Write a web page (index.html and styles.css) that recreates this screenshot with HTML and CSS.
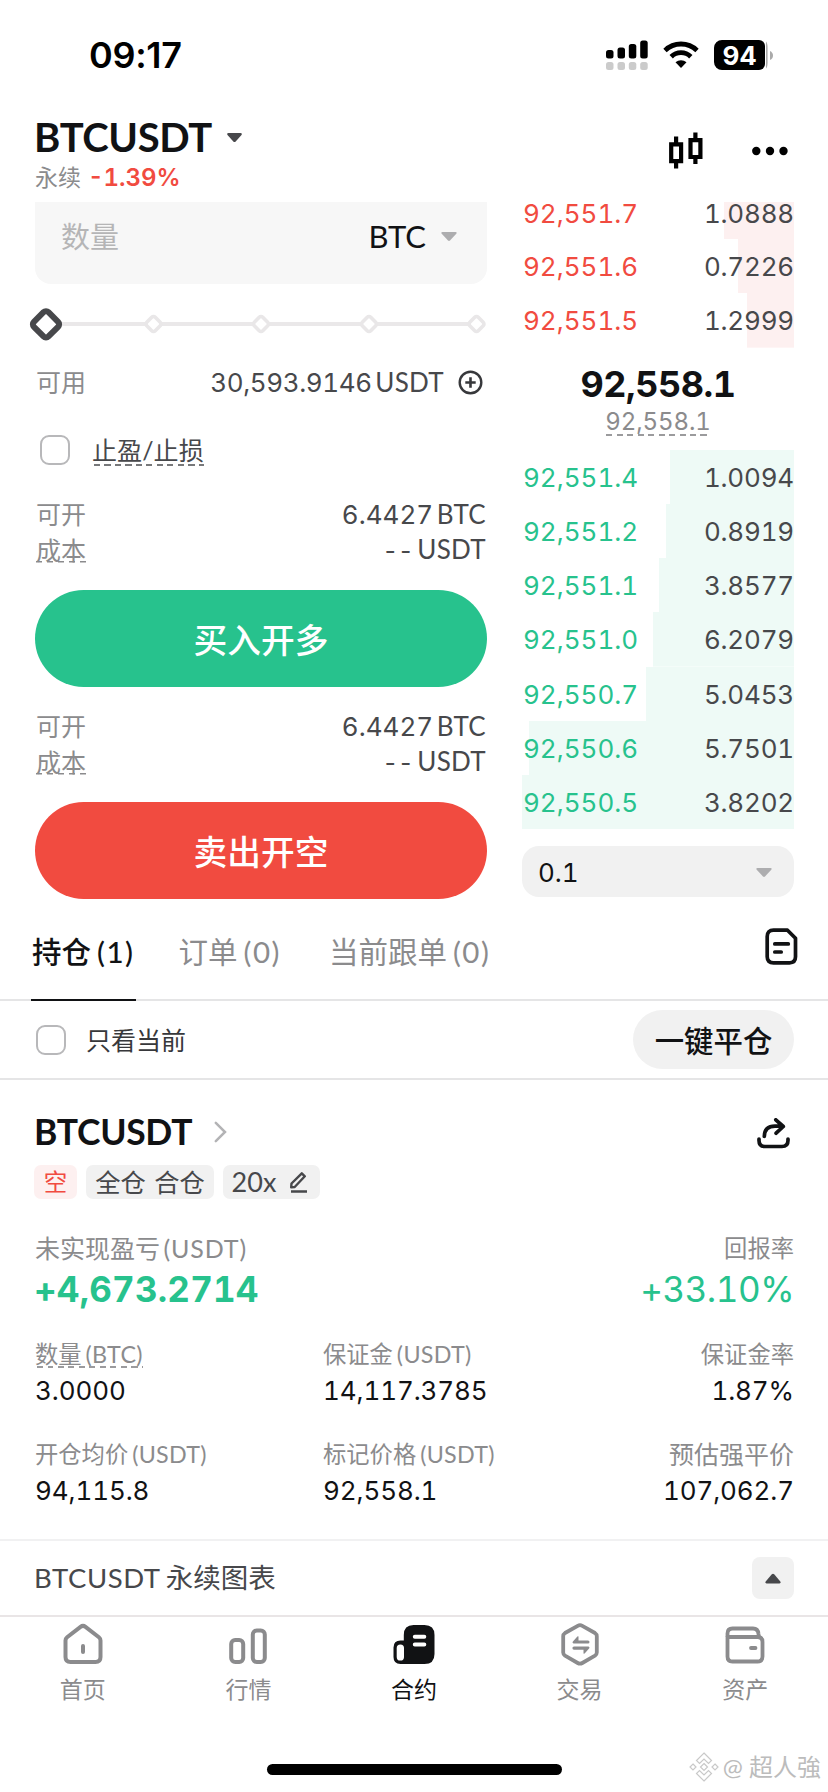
FILE: index.html
```html
<!DOCTYPE html>
<html lang="zh-CN">
<head>
<meta charset="utf-8">
<title>BTCUSDT 永续</title>
<link rel="stylesheet" href="styles.css">
</head>
<body>
<div class="status">
  <span class="clock">09:17</span>
  <div class="status-icons">
    <svg width="42" height="30" viewBox="0 0 42 30"><g fill="#000"><rect x="0" y="10" width="7.500" height="8.500" rx="2.500"/><rect x="11.500" y="7.500" width="7.500" height="11" rx="2.500"/><rect x="22.800" y="4" width="7.500" height="14.500" rx="2.500"/><rect x="34.200" y="0.500" width="7.500" height="18" rx="2.500"/></g><g fill="#cbcbcb"><rect x="0" y="22" width="7.500" height="8" rx="2.500"/><rect x="11.500" y="22" width="7.500" height="8" rx="2.500"/><rect x="22.800" y="22" width="7.500" height="8" rx="2.500"/><rect x="34.200" y="22" width="7.500" height="8" rx="2.500"/></g></svg>
    <svg class="wifi" width="36" height="28" viewBox="0 0 36 28"><g fill="none" stroke="#000" stroke-width="4.800"><path d="M2 9.500a23 23 0 0 1 32 0"/><path d="M8.200 15.700a14 14 0 0 1 19.600 0"/></g><path d="M12.500 21.200a8.700 8.700 0 0 1 11 0l-5.500 5.800z"/></svg>
    <span class="battery">94</span>
    <svg class="cap" width="7" height="30" viewBox="0 0 7 30"><path d="M0 1.500Q1.600 3 1.600 8v14q0 5-1.600 6.500z" fill="#aaa"/><path d="M4 11q3 1.500 3 4.500t-3 4.500z" fill="#aaa"/></svg>
  </div>
</div>

<header class="header">
  <div>
    <div class="pair"><span class="pair-name">BTCUSDT</span><svg width="15" height="10" viewBox="0 0 15 10"><path d="M1.500 0h12q2 .3 1 2L8.700 8.600q-1.200 1-2.400 0L.5 2q-1-1.700 1-2z" fill="#47484b"/></svg></div>
    <div class="change"><span class="perp">永续</span><span class="pct num">-1.39%</span></div>
  </div>
  <div class="header-icons">
    <svg width="34" height="37" viewBox="0 0 34 37"><g fill="none" stroke="#000" stroke-width="4.200"><path d="M2.200 12.300h9.900v16.800H2.200zM7.100 4.500v7M7.100 30v6.500M21.500 8.200h9.900V25h-9.900zM26.400.5V8M26.400 25v7"/></g></svg>
    <svg width="36" height="10" viewBox="0 0 36 10"><circle cx="4.300" cy="5" r="4.200"/><circle cx="18" cy="5" r="4.200"/><circle cx="31.500" cy="5" r="4.200"/></svg>
  </div>
</header>

<main class="trade">
  <section class="form">
    <div class="amount"><span class="placeholder">数量</span><span class="unit">BTC</span><svg width="16" height="10" viewBox="0 0 16 10"><path d="M1.500 0h13q1.800.3.800 1.700L9 8.600q-1 .9-2 0L.7 1.700q-1-1.400.8-1.700z" fill="#adadaf"/></svg></div>
    <svg class="slider" width="460" height="80" viewBox="0 0 460 80">
      <path d="M20 40h426" stroke="#eae8e9" stroke-width="4"/>
      <g fill="#fff" stroke="#e9e7e8" stroke-width="3.600">
        <rect x="-6" y="-6" width="12" height="12" rx="2.500" transform="translate(124.500 40) rotate(45)"/>
        <rect x="-6" y="-6" width="12" height="12" rx="2.500" transform="translate(232 40) rotate(45)"/>
        <rect x="-6" y="-6" width="12" height="12" rx="2.500" transform="translate(340 40) rotate(45)"/>
        <rect x="-6" y="-6" width="12" height="12" rx="2.500" transform="translate(447.500 40) rotate(45)"/>
      </g>
      <rect x="-10.300" y="-10.300" width="20.600" height="20.600" rx="3.500" fill="#fff" stroke="#47484b" stroke-width="6" transform="translate(17 40.300) rotate(45)"/>
    </svg>
    <div class="row"><span class="label">可用</span><span class="amt avail"><span class="num">30,593.9146</span> <span class="lat">USDT</span></span><svg class="plus" width="25" height="25" viewBox="0 0 25 25"><g fill="none" stroke="#37383b" stroke-width="2.400"><circle cx="12.500" cy="12.500" r="10.800"/><path d="M7.300 12.500h10.400M12.500 7.300v10.400" stroke-width="2.600"/></g></svg></div>
    <div class="tpsl"><span class="box"></span><span class="dash">止盈/止损</span></div>
    <div class="row"><span class="label">可开</span><span class="amt"><span class="num">6.4427</span> <span class="lat">BTC</span></span></div>
    <div class="row"><span class="label cost">成本</span><span class="amt"><span class="num minus">--</span> <span class="lat">USDT</span></span></div>
    <div class="btn buy">买入开多</div>
    <div class="row"><span class="label">可开</span><span class="amt"><span class="num">6.4427</span> <span class="lat">BTC</span></span></div>
    <div class="row"><span class="label cost">成本</span><span class="amt"><span class="num minus">--</span> <span class="lat">USDT</span></span></div>
    <div class="btn sell">卖出开空</div>
  </section>

  <section class="book num">
    <div class="ask cut" style="--w:70px"><b>92,551.7</b><i>1.0888</i></div>
    <div class="ask" style="--w:56px"><b>92,551.6</b><i>0.7226</i></div>
    <div class="ask" style="--w:47px"><b>92,551.5</b><i>1.2999</i></div>
    <div class="last"><span class="big">92,558.1</span><span class="mark">92,558.1</span></div>
    <div class="bid" style="--w:124px"><b>92,551.4</b><i>1.0094</i></div>
    <div class="bid" style="--w:128px"><b>92,551.2</b><i>0.8919</i></div>
    <div class="bid" style="--w:135px"><b>92,551.1</b><i>3.8577</i></div>
    <div class="bid" style="--w:141px"><b>92,551.0</b><i>6.2079</i></div>
    <div class="bid" style="--w:148px"><b>92,550.7</b><i>5.0453</i></div>
    <div class="bid" style="--w:265.500px"><b>92,550.6</b><i>5.7501</i></div>
    <div class="bid" style="--w:272px"><b>92,550.5</b><i>3.8202</i></div>
    <div class="step"><span>0.1</span><svg width="16" height="10" viewBox="0 0 16 10"><path d="M1.500 0h13q1.800.3.800 1.700L9 8.600q-1 .9-2 0L.7 1.700q-1-1.400.8-1.700z" fill="#adadaf"/></svg></div>
  </section>
</main>

<nav class="tabs">
  <div class="tab on">持仓<span>(1)</span></div>
  <div class="tab t2">订单<span>(0)</span></div>
  <div class="tab t3">当前跟单<span>(0)</span></div>
  <svg class="doc" width="33" height="37" viewBox="0 0 33 37"><path d="M8.500 2.200H22.500l8 8v18.600q0 6-6 6h-16q-6.300 0-6.300-6V8.500q0-6.300 6.300-6.300zM9.800 15.900h13.500M9.800 24h6.400" fill="none" stroke="#111214" stroke-width="3.700" stroke-linecap="round" stroke-linejoin="round"/></svg>
</nav>

<div class="filter"><span class="box"></span><span class="only">只看当前</span><span class="close-all">一键平仓</span></div>

<section class="position">
  <div class="pos-head"><span class="pos-name">BTCUSDT</span>
    <svg width="13" height="22" viewBox="0 0 13 22"><path d="M1.800 1.800 11 11l-9.200 9.200" fill="none" stroke="#b3b3b5" stroke-width="2.500" stroke-linecap="round"/></svg>
    <svg class="share" width="33" height="31" viewBox="0 0 33 31"><g fill="none" stroke="#111214" stroke-width="3.700" stroke-linecap="round" stroke-linejoin="round"><path d="M2 21v1.500q0 6 6 6h17q6 0 6-6V21M7.300 18.500Q7.500 8.200 18 8.200h8M18.800 1.800 26.300 8.500l-7.200 6.700"/></g></svg>
  </div>
  <div class="tags"><span class="tag short">空</span><span class="tag mode">全仓 合仓</span><span class="tag lev">20x<svg width="18" height="21" viewBox="0 0 18 21"><g fill="none" stroke="#47484b" stroke-width="2.400" stroke-linejoin="round"><path d="M1.500 11.500 11.800 1.300l3 3L4.700 15l-3.500.3zM1 19.500h16"/></g></svg></span></div>
  <div class="pnl-labels"><span>未实现盈亏 <em>(USDT)</em></span><span class="roi-label">回报率</span></div>
  <div class="pnl num"><strong>+4,673.2714</strong><span>+33.10%</span></div>
  <div class="stats">
    <div><label class="dash">数量 <em>(BTC)</em></label><p class="num">3.0000</p></div>
    <div><label>保证金 <em>(USDT)</em></label><p class="num">14,117.3785</p></div>
    <div><label>保证金率</label><p class="num">1.87%</p></div>
    <div><label>开仓均价 <em>(USDT)</em></label><p class="num">94,115.8</p></div>
    <div><label>标记价格 <em>(USDT)</em></label><p class="num">92,558.1</p></div>
    <div><label class="liq">预估强平价</label><p class="num">107,062.7</p></div>
  </div>
</section>

<div class="chart-bar"><span><em>BTCUSDT</em> 永续图表</span><div class="expand"><svg width="16" height="11" viewBox="0 0 16 11"><path d="M1.500 10.500h13q1.800-.3.800-1.900L9.200 1.300q-1.200-1.200-2.400 0L.7 8.600q-1 1.600.8 1.900z" fill="#47484b"/></svg></div></div>

<footer class="nav">
  <div class="item"><svg width="44" height="46" viewBox="0 0 44 46"><path d="M4.500 17.500q0-2 1.600-3.300L19.500 3.800q2.500-1.800 5 0l13.400 10.400q1.600 1.300 1.600 3.300V34q0 5-5 5h-25q-5 0-5-5zM22 23v6" fill="none" stroke="#8b8b8d" stroke-width="4" stroke-linecap="round"/></svg>首页</div>
  <div class="item"><svg width="44" height="46" viewBox="0 0 44 46"><g fill="none" stroke="#8b8b8d" stroke-width="4"><rect x="5.200" y="17" width="12" height="22" rx="4"/><rect x="26.800" y="7.500" width="12" height="31.500" rx="4"/></g></svg>行情</div>
  <div class="item on"><svg width="44" height="46" viewBox="0 0 44 46"><path d="M21.500 2h11q10 0 10 10v19q0 10-10 10H8.500q-7 0-7-7V24.500q0-7 7-7h3.300V12q0-10 9.700-10z" fill="#111214"/><rect x="4.700" y="21.500" width="7.300" height="16" rx="3.600" fill="#fff"/><path d="M22.800 13.700h9.500M22.800 21.600h9.500" stroke="#fff" stroke-width="4" stroke-linecap="round"/></svg>合约</div>
  <div class="item"><svg width="44" height="46" viewBox="0 0 44 46"><g fill="none" stroke="#8b8b8d" stroke-width="3.800" stroke-linejoin="round" stroke-linecap="round"><path d="M19.700 2.800q2.300-1.300 4.600 0L37 10q1.800 1.200 1.800 3.300v16.200q0 2-1.800 3.200L24.300 40q-2.300 1.300-4.600 0L7 32.700q-1.800-1.200-1.800-3.200V13.300q0-2.100 1.800-3.300z"/></g><path d="M20.500 13.500v4H30a1.500 1.500 0 0 1 0 3H15.500q-1.500-.5-.8-1.800l4-4.400q1-1.300 1.800-.8zM25.500 30.500v-3.800H16a1.500 1.500 0 0 1 0-3.200h14.500q1.500.5.800 1.800l-4 4.400q-1 1.300-1.800.8z" fill="#8b8b8d"/></svg>交易</div>
  <div class="item"><svg width="44" height="46" viewBox="0 0 44 46"><g fill="none" stroke="#8b8b8d" stroke-width="3.800" stroke-linejoin="round"><path d="M4.500 14V10.500q0-5 5-5H30q5 0 5.500 5.500l.5 3"/><path d="M4.500 14h30q5 0 5 5v14.500q0 5-5 5h-25q-5 0-5-5z"/><path d="M28 25h4.500" stroke-linecap="round"/></g></svg>资产</div>
</footer>
<div class="home"><span class="bar"></span>
  <div class="watermark"><svg width="30" height="30" viewBox="0 0 30 30"><g fill="#fff" stroke="#c9c9c9" stroke-width="1.200"><path d="m15 1 7.500 7.500-3 3L15 7l-4.500 4.500-3-3zM15 29l7.500-7.500-3-3L15 23l-4.500-4.500-3 3zM4 12l3 3-3 3-3-3zM26 12l3 3-3 3-3-3zM15 11.500l3.500 3.500-3.500 3.500-3.500-3.500z"/></g></svg><span>@ 超人強</span></div>
</div>
</body>
</html>
```
FILE: styles.css
```css
* { box-sizing: border-box; }
body {
  margin: 0;
  width: 828px;
  height: 1792px;
  overflow: hidden;
  background: #fff;
  color: #111214;
  font-family: Lato, "Noto Sans CJK SC", sans-serif;
  white-space: nowrap;
}
svg { display: block; flex: none; }
em, i { font-style: normal; }
.num { font-family: Inter, "Noto Sans CJK SC", sans-serif; font-variant-numeric: tabular-nums; }

.status { height: 110px; display: flex; justify-content: space-between; padding: 0 55px 0 89px; }
.clock { font: 600 36px/40px Inter, sans-serif; letter-spacing: -.3px; padding-top: 35px; color: #000; }
.status-icons { display: flex; padding-top: 40px; }
.wifi { margin: 1px 15px 0 15px; }
.battery { width: 51px; height: 30px; border-radius: 8px 6px 6px 8px; background: #000; color: #fff; font: 700 26px/31px Inter, sans-serif; text-align: center; letter-spacing: -.3px; }
.cap { margin-left: 1px; }

.header { height: 92px; display: flex; justify-content: space-between; padding: 0 40px 0 34px; }
.pair { display: flex; align-items: center; gap: 15px; height: 56px; }
.pair-name { font-size: 40px; font-weight: 700; line-height: 54px; height: 56px; letter-spacing: -.4px; }
.change { display: flex; height: 24px; line-height: 23px; font-size: 23px; padding-left: 1px; }
.perp { color: #8b8b8d; margin-right: 7px; }
.pct { color: #f14b40; font-size: 24px; font-weight: 600; }
.header-icons { display: flex; gap: 49px; padding-top: 22px; height: 60px; }
.header-icons svg:last-child { margin-top: 14px; }

.trade { display: flex; justify-content: space-between; padding: 0 34px 0 35px; height: 713px; }
.form { width: 452px; }
.amount { height: 82px; background: #f7f7f7; border-radius: 0 0 16px 16px; display: flex; align-items: center; padding: 0 30px 12px 26px; }
.placeholder { flex: 1; font-size: 29px; color: #b5b5b6; line-height: 40px; }
.unit { font-size: 31px; line-height: 38px; height: 40px; margin-right: 15px; }
.slider { margin-left: -6px; }
.row { height: 36px; display: flex; align-items: center; justify-content: space-between; font-size: 25px; line-height: 36px; padding: 0 1px; }
.label { color: #8b8b8d; }
.amt { color: #47484b; font-size: 26px; word-spacing: -3px; }
.amt .lat { letter-spacing: .3px; }
.avail { margin-left: auto; margin-right: 14px; }
.avail .num { letter-spacing: -.4px; }
.plus { margin-right: 3px; }
.amt .minus { letter-spacing: 0; font-size: 24px; }
.cost { background: repeating-linear-gradient(90deg, #8b8b8d 0 6px, transparent 6px 11px) 0 29px / 100% 1.500px no-repeat; }
.tpsl { height: 96px; display: flex; align-items: center; padding: 3px 0 0 5px; }
.box { width: 30px; height: 30px; border: 2px solid #b8b8ba; border-radius: 9px; flex: none; }
.tpsl .dash { margin-left: 22px; font-size: 25px; line-height: 32px; letter-spacing: .1px; color: #47484b; background: repeating-linear-gradient(90deg, #77787a 0 6px, transparent 6px 10.500px) 2px 30px / 100% 2px no-repeat; }
.btn { height: 97px; margin: 22px 0 21px; border-radius: 49px; color: #fff; font-size: 33.700px; font-weight: 500; line-height: 101px; text-align: center; }
.buy { background: #27c28d; }
.sell { background: #f14b40; }

.book { width: 272px; font-size: 26px; }
.book b { font-weight: 400; }
.book i { color: #47484b; letter-spacing: -.2px; }
.ask, .bid { height: 54.280px; display: flex; justify-content: space-between; align-items: center; padding: 2px 0 0 1px; line-height: 32px; }
.ask { color: #f14b40; background: linear-gradient(#fdf0f0, #fdf0f0) right / var(--w) 100% no-repeat; }
.bid { color: #27c28d; background: linear-gradient(#eefaf6, #eefaf6) right / var(--w) 100% no-repeat; }
.cut { height: 37px; padding-bottom: 16px; }
.last { height: 102px; display: flex; flex-direction: column; align-items: center; padding-top: 16px; }
.big { font-size: 36px; font-weight: 700; line-height: 40px; letter-spacing: -.5px; }
.mark { margin-top: 3px; font-size: 24px; line-height: 30px; color: #8b8b8d; letter-spacing: -.1px; background: repeating-linear-gradient(90deg, #9b9b9d 0 6px, transparent 6px 10.500px) 1px 27px / 100% 2px no-repeat; }
.step { margin-top: 17px; height: 51px; border-radius: 17px; background: #f1f1f1; display: flex; align-items: center; justify-content: space-between; padding: 2px 22px 0 16px; }

.tabs { height: 86px; padding: 0 31px; display: flex; border-bottom: 2px solid #e5e5e6; }
.tab { height: 86px; font-size: 29.500px; line-height: 74px; color: #8b8b8d; padding: 0 1px; }
.tab span { margin-left: 6px; letter-spacing: 1.500px; }
.tab.on { color: #111214; font-weight: 500; border-bottom: 2px solid #111214; }
.t2 { margin-left: 42px; }
.t3 { margin-left: 46px; }
.doc { margin: 13px -1px 0 auto; }
.filter { height: 79px; display: flex; align-items: center; border-bottom: 2px solid #e5e5e6; padding: 0 34px 0 36px; }
.only { flex: 1; margin-left: 20px; font-size: 25px; line-height: 36px; color: #37383b; }
.close-all { width: 161px; height: 59px; border-radius: 30px; background: #f1f1f1; font-size: 29.400px; line-height: 62px; font-weight: 500; text-align: center; }

.position { height: 459px; padding: 0 34px; }
.pos-head { height: 85px; display: flex; align-items: center; padding: 18px 4px 0 0; }
.pos-name { font-size: 35.500px; font-weight: 700; letter-spacing: -.3px; margin-right: 22px; }
.share { margin-left: auto; margin-top: 4px; }
.tags { display: flex; gap: 9px; height: 34px; font-size: 25px; line-height: 34px; color: #47484b; }
.tag { border-radius: 7px; background: #f1f1f1; height: 34px; text-align: center; }
.short { width: 43px; color: #f14b40; background: #fdf0f0; font-size: 23.500px; }
.mode { width: 128px; font-size: 25.300px; word-spacing: 2px; }
.lev { width: 97px; display: flex; justify-content: center; align-items: center; gap: 14px; font-size: 27px; padding-right: 3px; }
.pnl-labels { display: flex; justify-content: space-between; padding: 0 0 0 1px; margin-top: 32px; height: 34px; line-height: 34px; font-size: 25px; color: #8b8b8d; word-spacing: -3px; }
.pnl-labels em { letter-spacing: .9px; }
.roi-label { font-size: 23.300px; }
.pnl { display: flex; justify-content: space-between; height: 44px; margin-top: 2px; line-height: 44px; color: #27c28d; font-size: 35px; }
.pnl strong { font-weight: 700; letter-spacing: .2px; }
.pnl span { letter-spacing: -.5px; }
.stats { display: grid; grid-template-columns: 288px 1fr 1fr; row-gap: 30px; padding-left: 1px; margin-top: 26px; }
.stats > div { height: 70px; }
.stats > div:nth-child(3n) { text-align: right; }
label { display: inline-block; height: 34px; line-height: 34px; font-size: 23.300px; color: #8b8b8d; word-spacing: -2px; }
label em { letter-spacing: .3px; }
.liq { font-size: 25px; }
label.dash { background: repeating-linear-gradient(90deg, #9b9b9d 0 6px, transparent 6px 10.500px) 2px 29px / 100% 2px no-repeat; }
.stats p { margin: 2px 0 0; font-size: 26px; line-height: 35px; letter-spacing: -.1px; }

.chart-bar { height: 78px; display: flex; justify-content: space-between; align-items: center; padding: 0 34px 0 34px; border-top: 2px solid #f1f1f2; border-bottom: 2px solid #e9e5e6; font-size: 27.500px; color: #47484b; word-spacing: -2px; }
.chart-bar span { line-height: 40px; padding-bottom: 1px; }
.chart-bar em { letter-spacing: .6px; }
.expand { width: 42px; height: 42px; border-radius: 8px; background: #f1f1f1; display: flex; align-items: center; justify-content: center; }
.nav { height: 114px; display: grid; grid-template-columns: repeat(5, 1fr); padding-top: 6px; }
.item { display: flex; flex-direction: column; align-items: center; font-size: 23px; line-height: 34px; color: #8b8b8d; gap: 3px; }
.item.on { color: #111214; }
.home { position: relative; height: 60px; padding: 33px 0 0 267px; }
.bar { display: block; width: 295px; height: 11px; border-radius: 6px; background: #000; }
.watermark { position: absolute; right: 7px; top: 19px; display: flex; align-items: center; gap: 4px; font-size: 24px; line-height: 34px; color: #bcbcbc; }
```
